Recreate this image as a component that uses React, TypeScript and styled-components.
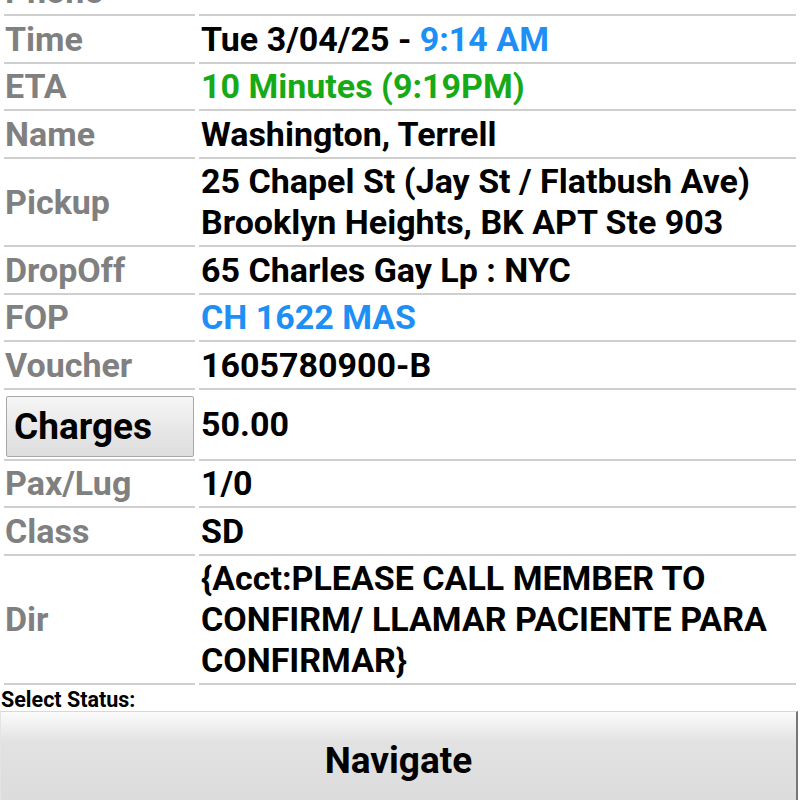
import { FC, ReactNode } from 'react'
import styled, { createGlobalStyle } from 'styled-components'

const GlobalStyle = createGlobalStyle`
  html, body {
    margin: 0;
    padding: 0;
    background: #fff;
    overflow: hidden;
  }
  body {
    font-family: Roboto, 'Noto Sans', Arial, sans-serif;
  }
`

type Tone = 'plain' | 'blue' | 'green'

const toneColor: Record<Tone, string> = {
  plain: '#000',
  blue: '#1e8ff5',
  green: '#17aa17'
}

const Page = styled.div`
  width: 800px;
  height: 800px;
  overflow: hidden;
  display: flex;
  flex-direction: column;
`

// list is scrolled: the Phone row sits mostly above the top edge
const Table = styled.div`
  margin-top: -31.5px;
  display: flex;
  flex-direction: column;
  padding: 0 4px;
`

const Row = styled.div`
  display: grid;
  grid-template-columns: 191px 1fr;
  column-gap: 4px;
`

const Cell = styled.div`
  border-bottom: 2px solid #cfcfcf;
  padding: 2.5px 0 2px;
  font-size: 34px;
  font-weight: 700;
  line-height: 41px;
  display: flex;
  align-items: center;
`

const Label = styled(Cell)`
  color: #808080;
  padding-left: 1px;
`

const Value = styled(Cell)<{ $tone?: Tone }>`
  color: ${({ $tone }) => toneColor[$tone || 'plain']};
  padding-left: 2px;
`

const Accent = styled.span<{ $tone: Tone }>`
  color: ${({ $tone }) => toneColor[$tone]};
`

const ButtonCell = styled.div`
  border-bottom: 2px solid #cfcfcf;
  padding: 6px 0 2px 2px;
  display: flex;
`

const ChargesButton = styled.button`
  width: 188px;
  height: 61px;
  text-align: left;
  padding: 0 0 0 7px;
  font-family: Roboto, Arial, sans-serif;
  font-size: 37px;
  font-weight: 700;
  color: #000;
  border: 1px solid #a8a8a8;
  border-radius: 2px;
  background: linear-gradient(#f6f6f6, #e6e6e6 60%, #dedede);
`

const StatusLabel = styled.div`
  font-size: 21.5px;
  font-weight: 700;
  color: #000;
  padding: 3px 0 0 1px;
  height: 26px;
  line-height: 24px;
  box-sizing: border-box;
`

const NavigateButton = styled.button`
  flex: 1;
  width: 798px;
  margin: 0;
  border: none;
  border-top: 1px solid #d8d8d8;
  border-right: 2px solid #777;
  border-left: 1px solid #e4e4e4;
  background: linear-gradient(#fbfbfb 0px, #e2e2e2 30px, #dcdcdc 100%);
  font-family: Roboto, Arial, sans-serif;
  font-size: 37px;
  font-weight: 700;
  color: #000;
  padding: 8px 0 0;
`

interface FieldProps {
  label: string
  tone?: Tone
  children?: ReactNode
}

const Field: FC<FieldProps> = ({ label, tone, children }) => (
  <Row>
    <Label>{label}</Label>
    <Value $tone={tone}>{children}</Value>
  </Row>
)

const App: FC = () => (
  <Page>
    <GlobalStyle />
    <Table>
      <Field label="Phone" />
      <Field label="Time">
        <span>
          Tue 3/04/25 - <Accent $tone="blue">9:14 AM</Accent>
        </span>
      </Field>
      <Field label="ETA" tone="green">
        10 Minutes (9:19PM)
      </Field>
      <Field label="Name">Washington, Terrell</Field>
      <Field label="Pickup">
        25 Chapel St (Jay St / Flatbush Ave) Brooklyn Heights, BK APT Ste 903
      </Field>
      <Field label="DropOff">65 Charles Gay Lp : NYC</Field>
      <Field label="FOP" tone="blue">
        CH 1622 MAS
      </Field>
      <Field label="Voucher">1605780900-B</Field>
      <Row>
        <ButtonCell>
          <ChargesButton>Charges</ChargesButton>
        </ButtonCell>
        <Value>50.00</Value>
      </Row>
      <Field label="Pax/Lug">1/0</Field>
      <Field label="Class">SD</Field>
      <Field label="Dir">
        {'{Acct:PLEASE CALL MEMBER TO CONFIRM/ LLAMAR PACIENTE PARA CONFIRMAR}'}
      </Field>
    </Table>
    <StatusLabel>Select Status:</StatusLabel>
    <NavigateButton>Navigate</NavigateButton>
  </Page>
)

export default App
